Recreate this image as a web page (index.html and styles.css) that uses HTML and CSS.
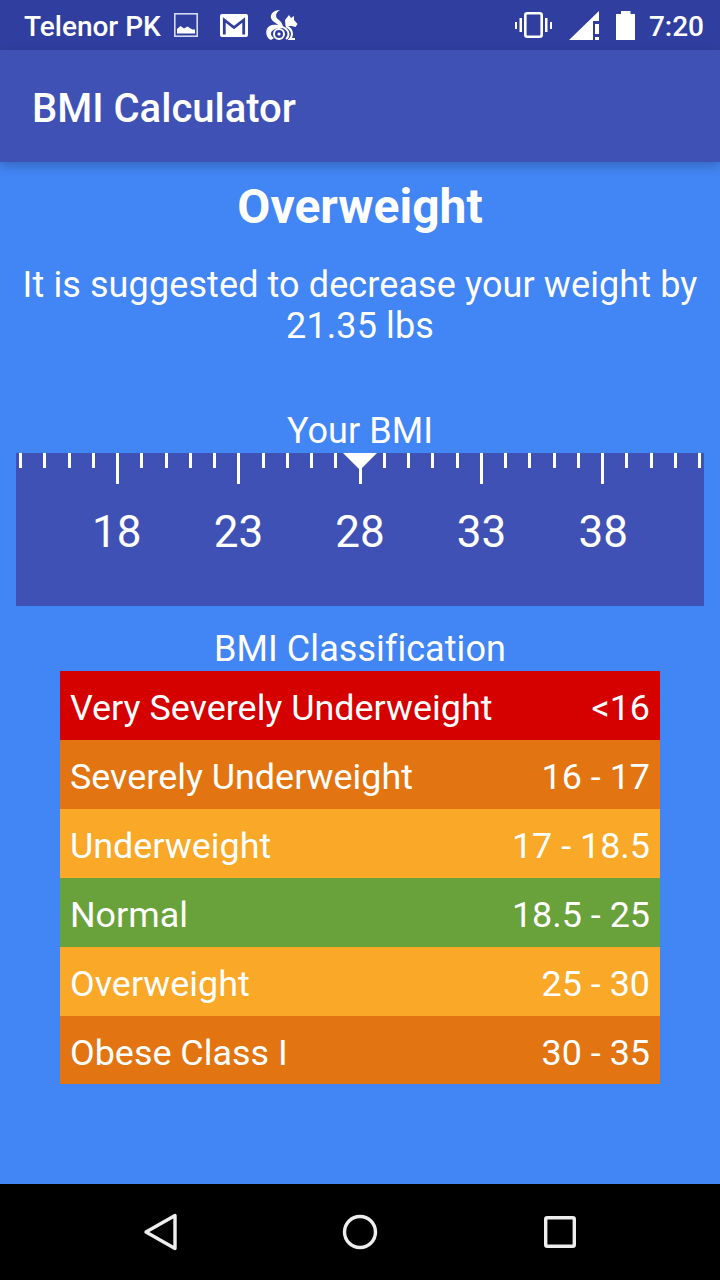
FILE: index.html
```html
<!DOCTYPE html>
<html lang="en">
<head>
    <meta charset="UTF-8">
    <meta name="viewport" content="width=device-width, initial-scale=1.0">
    <title>BMI Calculator</title>
    <link rel="stylesheet" href="styles.css">
</head>
<body>
    <div class="status-bar">
        <div class="status-left">
            <span class="carrier">Telenor PK</span>
            <svg width="24" height="24" viewBox="0 0 24 24">
                <rect x="0.8" y="0.8" width="22.400" height="22.400" fill="none" stroke="#d5daf0" stroke-width="1.600"/>
                <path d="M3 20.500v-4.500l3.500-3 3.500 2.500 3.500-2 3 2 2 1 2.500 0v4z" fill="#fff"/>
            </svg>
            <svg class="icon-mail" width="28" height="23" viewBox="0 0 28 23">
                <rect width="28" height="23" rx="2" fill="#fff"/>
                <path d="M4.300 20.500V6L14 13.500 23.700 6v14.500" fill="none" stroke="#303f9f" stroke-width="2.800"/>
            </svg>
            <svg class="icon-uc" width="32" height="30" viewBox="0 0 32 30">
                <path d="M14 0C8 0 4 4 5 8c1 4 6 5 7 7-5-1-10 0-11.500 5C-.5 25 2 29 5 30l3-2c-3-2-4-5-2-7 2-2 5-3 9-3 3 0 2-3 0-6-3-3-5-4-5-6 0-3 2-5 4-6z" fill="#fff"/>
                <path d="M19 10l4-5 2 3 3-2v4l3.500 4-2 3-4-1-6 0z" fill="#fff"/>
                <circle cx="13" cy="24" r="5" fill="none" stroke="#fff" stroke-width="2"/>
                <circle cx="13" cy="24" r="1.600" fill="#fff"/>
                <path d="M13 16.500c6 0 9.500 4 9.500 7.500 0 2-1 4-2.500 5M20 16c4 2 6 5 6 8 0 2-1 4-2 5h5" fill="none" stroke="#fff" stroke-width="2"/>
            </svg>
        </div>
        <div class="status-right">
            <svg width="37" height="26" viewBox="0 0 37 26">
                <rect x="10.300" y="1.300" width="16.400" height="23.400" rx="2" fill="none" stroke="#fff" stroke-width="2.600"/>
                <path d="M4.500 6H7v14H4.500zM30 6h2.500v14H30zM0 10h2v7H0zM35 10h2v7h-2z" fill="#fff"/>
            </svg>
            <svg class="icon-signal" width="30" height="29" viewBox="0 0 30 29">
                <path d="M0 29 30 0v10h-6v19z" fill="#fff"/>
                <path d="M26 13h4v10h-4zM26 26h4v3h-4z" fill="#fff"/>
            </svg>
            <svg class="icon-battery" width="19" height="29" viewBox="0 0 19 29">
                <path d="M5 0h9.500v3H19v26H0V3h5z" fill="#fff"/>
            </svg>
            <span class="clock">7:20</span>
        </div>
    </div>

    <div class="toolbar">BMI Calculator</div>

    <div class="content">
        <h1 class="result-title">Overweight</h1>
        <p class="result-text">It is suggested to decrease your weight by 21.35 lbs</p>

        <div class="section-label bmi-label">Your BMI</div>
        <div class="ruler">
            <div class="ticks">
                <i></i><i></i><i></i><i></i><i class="long"></i><i></i><i></i><i></i><i></i><i class="long"></i>
                <i></i><i></i><i></i><i></i><i class="long"></i><i></i><i></i><i></i><i></i><i class="long"></i>
                <i></i><i></i><i></i><i></i><i class="long"></i><i></i><i></i><i></i><i></i>
            </div>
            <div class="pointer"></div>
            <div class="ruler-nums">
                <span>18</span><span>23</span><span>28</span><span>33</span><span>38</span>
            </div>
        </div>

        <div class="section-label class-label">BMI Classification</div>
        <div class="class-table">
            <div class="class-row red"><span>Very Severely Underweight</span><span>&lt;16</span></div>
            <div class="class-row orange"><span>Severely Underweight</span><span>16 - 17</span></div>
            <div class="class-row amber"><span>Underweight</span><span>17 - 18.5</span></div>
            <div class="class-row green"><span>Normal</span><span>18.5 - 25</span></div>
            <div class="class-row amber"><span>Overweight</span><span>25 - 30</span></div>
            <div class="class-row orange"><span>Obese Class I</span><span>30 - 35</span></div>
        </div>
    </div>

    <div class="nav-bar">
        <svg width="36" height="40" viewBox="0 0 36 40">
            <path d="M4 20 33 3.500v33z" fill="none" stroke="#eee" stroke-width="3.400" stroke-linejoin="round"/>
        </svg>
        <svg width="36" height="36" viewBox="0 0 36 36">
            <circle cx="18" cy="18" r="15.500" fill="none" stroke="#eee" stroke-width="3.400"/>
        </svg>
        <svg width="32" height="32" viewBox="0 0 32 32">
            <rect x="1.700" y="1.700" width="28.600" height="28.600" rx="1.500" fill="none" stroke="#eee" stroke-width="3.400"/>
        </svg>
    </div>
</body>
</html>
```

FILE: styles.css
```css
* {
    box-sizing: border-box;
}
body {
    margin: 0;
    display: flex;
    flex-direction: column;
    height: 1280px;
    overflow: hidden;
    font-family: Roboto, sans-serif;
    color: #fff;
    background-color: #4285f4;
}
.status-bar {
    height: 50px;
    display: flex;
    justify-content: space-between;
    align-items: center;
    padding: 0 16px 0 24px;
    background-color: #303f9f;
}
.status-left,
.status-right {
    display: flex;
    align-items: center;
}
.carrier {
    padding-top: 3px;
    margin-right: 13px;
    font-size: 28px;
    font-weight: 500;
}
.icon-mail {
    margin-left: 22px;
}
.icon-uc {
    margin-left: 18px;
}
.icon-signal {
    margin-left: 17px;
}
.icon-battery {
    margin-left: 17px;
}
.clock {
    padding-top: 2px;
    margin-left: 14px;
    font-size: 28px;
    font-weight: 500;
}
.toolbar {
    position: relative;
    z-index: 1;
    height: 112px;
    display: flex;
    align-items: center;
    padding: 4px 0 0 32px;
    font-size: 40px;
    font-weight: 500;
    background-color: #3f51b5;
    box-shadow: 0 4px 10px rgba(0, 0, 0, 0.22);
}
.content {
    flex: 1;
    text-align: center;
}
.result-title {
    margin: 18px 0 0;
    font-size: 48px;
    line-height: 53px;
    font-weight: 700;
}
.result-text {
    margin: 32px 0 0;
    padding: 0 16px;
    font-size: 36px;
    line-height: 41px;
    letter-spacing: 0.1px;
}
.section-label {
    font-size: 36px;
    line-height: 42px;
    letter-spacing: 0.05px;
}
.bmi-label {
    margin-top: 63px;
    height: 43px;
}
.ruler {
    position: relative;
    height: 153px;
    margin: 0 16px;
    background-color: #3f51b5;
}
.ticks {
    display: flex;
    justify-content: space-between;
    align-items: flex-start;
    padding: 0 3px;
}
.ticks i {
    display: block;
    width: 3px;
    height: 15px;
    background-color: #fff;
}
.ticks i.long {
    height: 31px;
}
.pointer {
    position: absolute;
    top: 0;
    left: 327px;
    border-top: 17px solid #fff;
    border-left: 17px solid transparent;
    border-right: 17px solid transparent;
}
.ruler-nums {
    display: grid;
    grid-template-columns: repeat(5, 1fr);
    padding: 22px 40px 0;
    font-size: 44px;
    line-height: 52px;
}
.class-label {
    margin-top: 22px;
    height: 43px;
}
.class-table {
    margin: 0 60px;
}
.class-row {
    display: flex;
    justify-content: space-between;
    height: 69px;
    padding: 16px 10px 0;
    font-size: 35.900px;
    line-height: 42px;
}
.class-row:last-child {
    height: 68px;
}
.red {
    background-color: #d50000;
}
.orange {
    background-color: #e27511;
}
.amber {
    background-color: #faa827;
}
.green {
    background-color: #69a13a;
}
.nav-bar {
    height: 96px;
    display: grid;
    grid-template-columns: repeat(3, 200px);
    justify-content: center;
    justify-items: center;
    align-items: center;
    background-color: #000;
}
```
